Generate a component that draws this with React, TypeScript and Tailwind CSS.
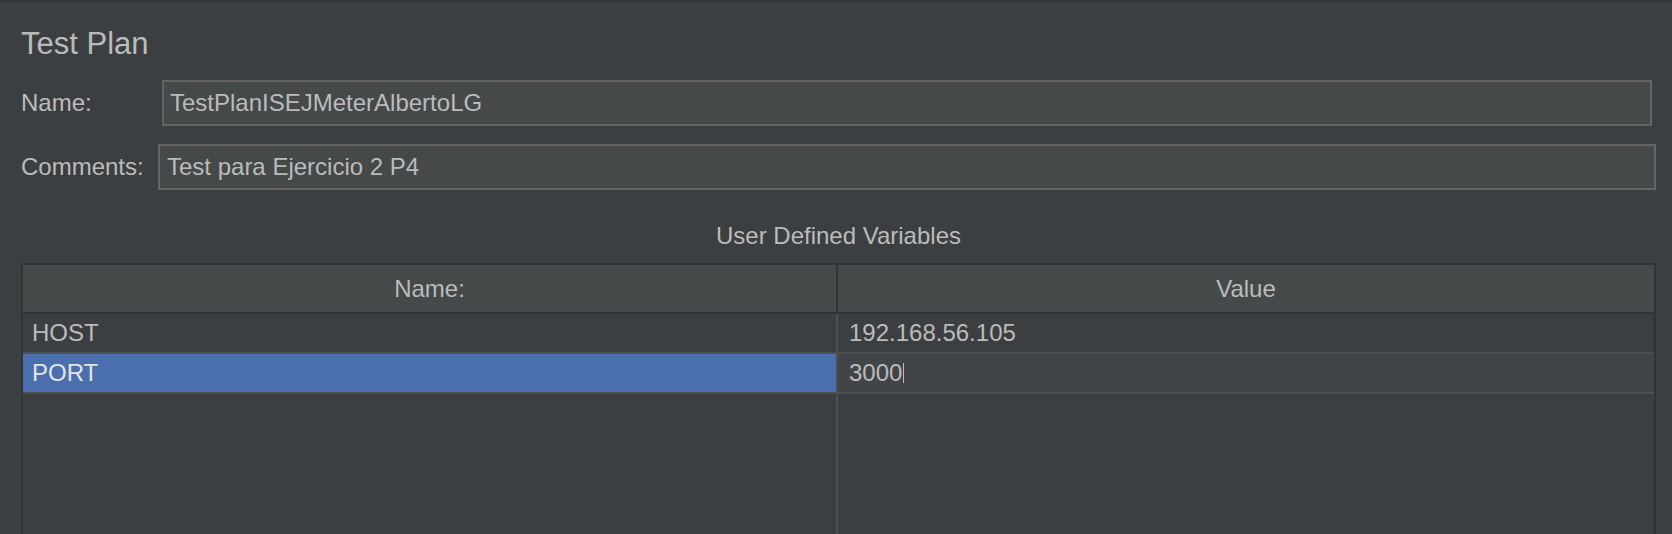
import React from "react";

const rows = [
  { name: "HOST", value: "192.168.56.105", selected: false },
  { name: "PORT", value: "3000", selected: true },
];

function Field({ label, value, labelW, pr, pl }: { label: string; value: string; labelW: string; pr: string; pl: string }) {
  return (
    <div className={`flex items-center h-[46px] pl-[21px] ${pr}`}>
      <div className={`${labelW} shrink-0 text-[24px] leading-[24px] text-[#bbbbbb]`}>{label}</div>
      <div className={`flex-1 h-[46px] flex items-center border-2 border-[#646464] bg-[#45494a] ${pl}`}>
        <span className="text-[24px] leading-[24px] text-[#bbbbbb] whitespace-nowrap">{value}</span>
      </div>
    </div>
  );
}

export default function App() {
  return (
    <div className="w-[1672px] h-[534px] overflow-hidden bg-[#3c3f41] font-['Liberation_Sans',Arial,sans-serif] flex flex-col">
      <div className="h-[2px] bg-[#333537] shrink-0" />

      <div className="mt-[26px] h-[31px] pl-[21px] text-[31px] leading-[31px] text-[#bbbbbb]">Test Plan</div>

      <div className="mt-[21px]">
        <Field label="Name:" value="TestPlanISEJMeterAlbertoLG" labelW="w-[141px]" pr="pr-[20px]" pl="pl-[6px]" />
      </div>
      <div className="mt-[18px]">
        <Field label="Comments:" value="Test para Ejercicio 2 P4" labelW="w-[137px]" pr="pr-[16px]" pl="pl-[7px]" />
      </div>

      <div className="mt-[34px] h-[24px] ml-[21px] w-[1635px] text-center text-[24px] leading-[24px] text-[#bbbbbb]">
        User Defined Variables
      </div>

      {/* table */}
      <div className="mt-[15px] ml-[21px] w-[1635px] flex-1 border-t-2 border-l-2 border-r-2 border-[#313335] flex flex-col">
        <div className="h-[49px] shrink-0 flex bg-[#45494a] border-b-2 border-[#313335]">
          <div className="w-[815px] flex items-center justify-center text-[24px] leading-[24px] text-[#bbbbbb] border-r-2 border-[#313335]">
            Name:
          </div>
          <div className="flex-1 flex items-center justify-center text-[24px] leading-[24px] text-[#bbbbbb]">Value</div>
        </div>

        {rows.map((r) => (
          <div key={r.name} className="h-[40px] shrink-0 flex border-b-2 border-[#4c4f51]">
            <div
              className={`w-[815px] flex items-center pl-[9px] text-[24px] leading-[24px] border-r-2 border-[#4c4f51] ${
                r.selected ? "bg-[#4b6eaf] text-[#e4e4e4]" : "text-[#bbbbbb]"
              }`}
            >
              {r.name}
            </div>
            <div
              className={`flex-1 flex items-center pl-[11px] text-[24px] leading-[24px] text-[#bbbbbb] ${
                r.selected ? "bg-[#424547]" : ""
              }`}
            >
              <span>{r.value}</span>
              {r.selected && <span className="w-px h-[20px] bg-[#bbbbbb] ml-px" />}
            </div>
          </div>
        ))}

        <div className="flex-1 flex">
          <div className="w-[815px] border-r-2 border-[#4c4f51]" />
          <div className="flex-1" />
        </div>
      </div>
    </div>
  );
}
